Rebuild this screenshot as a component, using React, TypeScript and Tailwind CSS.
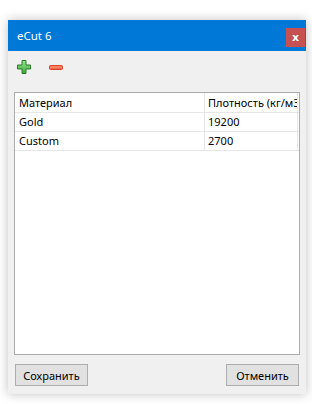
import React from "react";

const font = { fontFamily: '"Noto Sans", "Open Sans", sans-serif' };

function PlusIcon() {
  return (
    <svg width="14" height="14" viewBox="0 0 14 14">
      <defs>
        <linearGradient id="pg" x1="0" y1="0" x2="0" y2="1">
          <stop offset="0" stopColor="#9ae695" />
          <stop offset="1" stopColor="#3aa836" />
        </linearGradient>
      </defs>
      <path
        d="M5 0.5 H9 V5 H13.5 V9 H9 V13.5 H5 V9 H0.5 V5 H5 Z"
        fill="url(#pg)"
        stroke="#2a7a27"
        strokeWidth="1"
      />
    </svg>
  );
}

function MinusIcon() {
  return (
    <svg width="14" height="5" viewBox="0 0 14 5">
      <rect x="0.5" y="0.5" width="13" height="4" rx="1" fill="#f26a4b" stroke="#d8452a" strokeWidth="1" />
      <rect x="1.5" y="1.5" width="11" height="1" fill="#ff9a80" />
    </svg>
  );
}

export default function App() {
  const rows = [
    ["Gold", "19200"],
    ["Custom", "2700"],
  ];
  return (
    <div className="w-[312px] h-[404px] bg-white pt-[20px] pl-[8px]" style={font}>
      <div className="w-[298px] h-[374px] bg-[#f0f0f0] flex flex-col shadow-[0_0_10px_rgba(0,0,0,0.25)]">
        <div className="h-[31px] bg-[#0078d7] flex items-start justify-between">
          <div className="text-white text-[11.5px] leading-[31px] pl-[9px]">eCut 6</div>
          <div className="mt-[8px] mr-[1px] w-[19px] h-[19px] bg-[#c75050] flex items-center justify-center text-white text-[11px] font-bold leading-none" style={{ fontFamily: '"DejaVu Sans", sans-serif' }}>
            x
          </div>
        </div>
        <div className="flex items-start h-[41px] pl-[9px] pt-[9px] gap-[18px]">
          <PlusIcon />
          <div className="mt-[5px]">
            <MinusIcon />
          </div>
        </div>
        <div className="ml-[6px] w-[286px] h-[263px] border border-[#acacac] bg-white text-[11px] text-black">
          <div className="flex h-[20px] border-b border-[#e6e6e6]">
            <div className="w-[190px] border-r border-[#e6e6e6] pl-[4px] leading-[19px] overflow-hidden whitespace-nowrap">Материал</div>
            <div className="w-[93px] border-r border-[#e6e6e6] pl-[3px] leading-[19px] overflow-hidden whitespace-nowrap">Плотность (кг/м3</div>
          </div>
          {rows.map(([a, b]) => (
            <div key={a} className="flex h-[19px] border-b border-[#e6e6e6]">
              <div className="w-[190px] border-r border-[#e6e6e6] pl-[4px] leading-[18px] whitespace-nowrap">{a}</div>
              <div className="w-[93px] border-r border-[#e6e6e6] pl-[3px] leading-[18px] whitespace-nowrap">{b}</div>
            </div>
          ))}
        </div>
        <div className="flex justify-between px-[7px] mt-[9px]">
          <button className="w-[73px] h-[22px] bg-[#e1e1e1] border border-[#adadad] text-[11px] text-black leading-none">Сохранить</button>
          <button className="w-[73px] h-[22px] bg-[#e1e1e1] border border-[#adadad] text-[11px] text-black leading-none">Отменить</button>
        </div>
      </div>
    </div>
  );
}
